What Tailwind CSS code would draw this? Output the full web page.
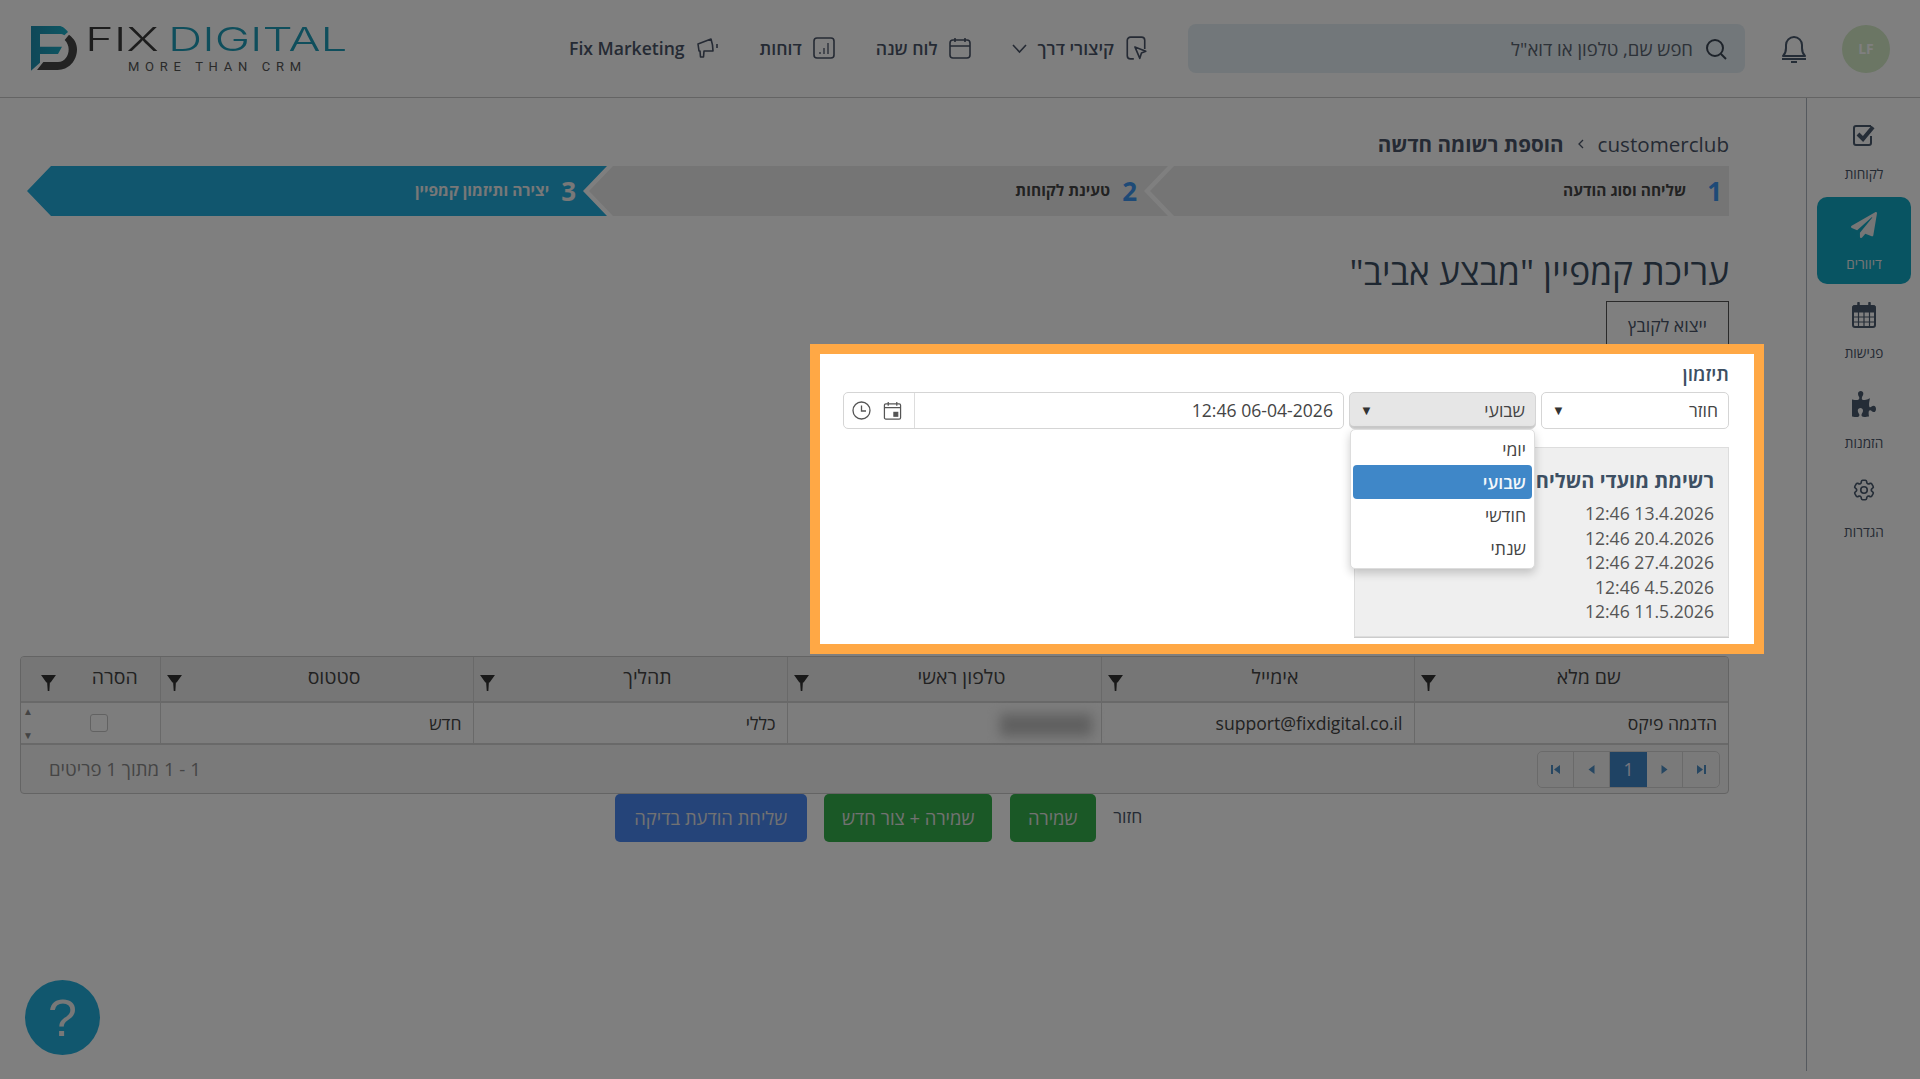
<!DOCTYPE html>
<html lang="he" dir="rtl">
<head>
  <meta charset="UTF-8">
  <title>עריכת קמפיין</title>
  <script src="https://cdn.jsdelivr.net/npm/@tailwindcss/browser@4"></script>
</head>
<body class="relative h-[1079px] overflow-hidden bg-white font-['Open_Sans','Noto_Sans',sans-serif] text-[#4a5568]">

  <!-- top bar -->
  <header class="flex h-[98px] items-center border-b border-[#c8c8c8] pr-[30px] pl-[31px]">
    <div class="flex size-12 items-center justify-center rounded-full bg-[#d6ecc8] text-sm font-bold text-white">LF</div>
    <svg class="mr-[35px] h-[28px] w-[26px] text-[#4a5a6e]" viewBox="0 0 26 28" fill="none" stroke="currentColor" stroke-width="2"><path d="M2 21c2-2 3-4 3-8V10a8 8 0 0 1 16 0v3c0 4 1 6 3 8z" stroke-linejoin="round"/><path d="M1 24h24"/><path d="M10 27h6"/></svg>
    <div class="mr-[36px] flex h-[49px] w-[557px] items-center gap-3 rounded-lg bg-[#e4eef4] px-[18px] text-[18.5px] text-[#5a6470]">
      <svg class="size-[22px] text-[#3b4654]" viewBox="0 0 22 22" fill="none" stroke="currentColor" stroke-width="2"><circle cx="10" cy="10" r="8"/><path d="m16 16 5 5"/></svg>
      <span>חפש שם, טלפון או דוא"ל</span>
    </div>
    <nav class="mr-[41px] flex items-center gap-[41px] text-[17.6px] font-semibold">
      <a class="flex items-center gap-[11px]">
        <svg class="h-[24px] w-[22px]" viewBox="0 0 20 22" fill="none" stroke="currentColor" stroke-width="1.500" stroke-linejoin="round"><path d="M8 21H5a3 3 0 0 1-3-3V4a3 3 0 0 1 3-3h10a3 3 0 0 1 3 3v8"/><path d="m9 10 10 4-4 1.500-1.500 5z"/></svg>
        <span>קיצורי דרך</span>
        <svg class="size-[15px]" viewBox="0 0 15 15" fill="none" stroke="currentColor" stroke-width="1.600"><path d="m1 4 6.500 7L14 4"/></svg>
      </a>
      <a class="flex items-center gap-[11px]">
        <svg class="size-[22px]" viewBox="0 0 22 22" fill="none" stroke="currentColor" stroke-width="1.600"><rect x="1" y="3" width="20" height="18" rx="3"/><path d="M1 9h20M6 1v4M16 1v4"/></svg>
        <span>לוח שנה</span>
      </a>
      <a class="flex items-center gap-[11px]">
        <svg class="size-[22px]" viewBox="0 0 22 22" fill="none" stroke="currentColor" stroke-width="1.600"><rect x="1" y="1" width="20" height="20" rx="3"/><path d="M7 15v2M11 11v6M15 6v11" stroke-width="1.300"/></svg>
        <span>דוחות</span>
      </a>
      <a class="flex items-center gap-[11px]">
        <svg class="h-[22px] w-[23px]" viewBox="0 0 23 22" fill="none" stroke="currentColor" stroke-width="1.600" stroke-linejoin="round"><path d="M2 7 15 2c1 3 2 8 2 12L8 14l-.500 6h-3L4 14H3z"/><path d="M21 7v4"/></svg>
        <span dir="ltr">Fix Marketing</span>
      </a>
    </nav>

    <!-- logo -->
    <div dir="ltr" class="mr-auto flex h-[46px] w-[312px]">
      <svg class="-mt-[6px] -ml-[6px] h-[56px] w-[60px] shrink-0" viewBox="0 0 180 168">
        <defs><linearGradient id="fd" x1="0" y1="0" x2="1" y2="0"><stop offset="0" stop-color="#1f8fb0"/><stop offset="1" stop-color="#1ab0c8"/></linearGradient></defs>
        <path fill="url(#fd)" d="M18 18h84c10 0 20 8 27 18L118 46c-3-3-8-4-14-4H45v38h66l-12 22H45v26l-27 24z"/>
        <path fill="#474747" d="M132 44c16 12 24 26 24 44 0 36-26 62-58 62H36l19-24h44c20 0 32-18 32-38 0-10-4-20-12-28z"/>
      </svg>
      <div class="flex flex-col">
        <div class="flex h-[26px] items-center font-['Inter'] text-[33px] leading-[26px] font-light">
          <span class="w-[83px] origin-left scale-x-[1.48] text-[#3a3a3a]">FIX</span>
          <span class="origin-left scale-x-[1.44] text-[#1e9db8]">DIGITAL</span>
        </div>
        <div class="mt-[9px] pl-[43px] font-['Roboto'] text-[13px] leading-[12px] tracking-[5.7px] whitespace-nowrap text-[#555]">MORE THAN CRM</div>
      </div>
    </div>
  </header>

  <div class="flex h-[973px]">
    <!-- side menu -->
    <aside class="flex h-[973px] w-[114px] shrink-0 flex-col gap-[2.5px] border-l border-[#aab2bd] pt-[9px] pr-[9px] pl-[10px] text-center text-[13.6px] leading-[18px]">
      <a class="flex h-[87px] flex-col items-center pt-[16px]">
        <svg class="size-[24px]" viewBox="0 0 24 24" fill="none"><path d="M19 13v7a2 2 0 0 1-2 2H4a2 2 0 0 1-2-2V5a2 2 0 0 1 2-2h15" stroke="#4a5a6e" stroke-width="2"/><path d="m6 11 5 5L21 4" stroke="#4a5a6e" stroke-width="4"/></svg>
        <span class="mt-[18px]">לקוחות</span>
      </a>
      <a class="flex h-[87px] flex-col items-center rounded-[10px] bg-[#11a8c4] pt-[15px] text-[#ececec]">
        <svg class="size-[26px]" viewBox="0 0 512 512" fill="currentColor"><path d="M476 3.200 12.500 270.600c-18.100 10.400-15.800 35.600 2.200 43.200L121 358.400l287.300-253.200c5.500-4.900 13.300 2.600 8.600 8.300L176 407v80.500c0 23.600 28.500 32.900 42.500 15.800L282 426l124.600 52.200c14.200 6 30.400-2.900 33-18.200l72-432C515 7.800 493.300-6.800 476 3.200z"/></svg>
        <span class="mt-[17px]">דיוורים</span>
      </a>
      <a class="flex h-[87px] flex-col items-center pt-[16px]">
        <svg class="h-[26px] w-[24px]" viewBox="0 0 24 26" fill="none" stroke="#4a5a6e"><rect x="1" y="4" width="22" height="21" rx="2" stroke-width="2"/><path d="M1 4h22v6H1z" fill="#4a5a6e"/><path d="M1 15h22M1 20h22M6.500 10v15M12 10v15M17.500 10v15" stroke-width="1.200"/><path d="M6.500 1v5M17.500 1v5" stroke-width="2.500" stroke-linecap="round"/></svg>
        <span class="mt-[16px]">פגישות</span>
      </a>
      <a class="flex h-[87px] flex-col items-center pt-[15px]">
        <svg class="h-[26px] w-[24px]" viewBox="0 0 576 512" preserveAspectRatio="none" fill="#4a5a6e"><path d="M519.442 288.651c-41.519 0-59.5 31.593-82.058 31.593C377.409 320.244 432 144 432 144s-196.288 80-196.288-3.297c0-35.827 36.288-46.250 36.288-85.985C272 19.216 243.885 0 210.539 0c-34.654 0-66.366 18.891-66.366 56.346 0 41.364 31.711 59.277 31.711 81.750C175.885 207.719 0 166.758 0 166.758v333.237s178.635 41.047 178.635-28.662c0-22.473-40-40.107-40-81.471 0-37.456 29.250-56.346 63.577-56.346 33.673 0 61.788 19.216 61.788 54.717 0 39.735-36.288 50.158-36.288 85.985 0 60.803 129.675 25.730 181.230 25.730 0 0-34.725-120.101 25.827-120.101 35.962 0 46.423 36.152 86.308 36.152C556.712 416 576 387.990 576 354.443c0-34.199-18.962-65.792-56.558-65.792z"/></svg>
        <span class="mt-[17px]">הזמנות</span>
      </a>
      <a class="flex h-[87px] flex-col items-center pt-[12px]">
        <svg class="size-[26px]" viewBox="0 0 24 24" fill="none" stroke="#4a5a6e" stroke-width="1.500"><path d="M9.594 3.940c.09-.542.56-.94 1.110-.94h2.593c.55 0 1.020.398 1.110.94l.213 1.281c.063.374.313.686.645.87.074.04.147.083.22.127.325.196.72.257 1.075.124l1.217-.456a1.125 1.125 0 0 1 1.370.49l1.296 2.247a1.125 1.125 0 0 1-.26 1.431l-1.003.827c-.293.241-.438.613-.43.992a7.723 7.723 0 0 1 0 .255c-.008.378.137.75.43.991l1.004.827c.424.35.534.955.26 1.430l-1.298 2.247a1.125 1.125 0 0 1-1.369.491l-1.217-.456c-.355-.133-.75-.072-1.076.124a6.470 6.470 0 0 1-.22.128c-.331.183-.581.495-.644.869l-.213 1.281c-.09.543-.56.94-1.110.94h-2.594c-.55 0-1.019-.398-1.110-.94l-.213-1.281c-.062-.374-.312-.686-.644-.87a6.520 6.520 0 0 1-.22-.127c-.325-.196-.72-.257-1.076-.124l-1.217.456a1.125 1.125 0 0 1-1.369-.49l-1.297-2.247a1.125 1.125 0 0 1 .26-1.431l1.004-.827c.292-.24.437-.613.43-.991a6.932 6.932 0 0 1 0-.255c.007-.38-.138-.751-.43-.992l-1.004-.827a1.125 1.125 0 0 1-.26-1.430l1.297-2.247a1.125 1.125 0 0 1 1.370-.491l1.216.456c.356.133.751.072 1.076-.124.072-.044.146-.086.22-.128.332-.183.582-.495.644-.869l.214-1.280Z"/><path d="M15 12a3 3 0 1 1-6 0 3 3 0 0 1 6 0Z"/></svg>
        <span class="mt-[20px]">הגדרות</span>
      </a>
    </aside>

    <main class="mr-[77px] ml-[20px] min-w-0 flex-1 pt-[32px]">
      <!-- breadcrumb -->
      <div class="flex h-[28px] items-center gap-[12px] text-[20.6px] leading-[28px]">
        <span>customerclub</span>
        <svg class="size-[10px]" viewBox="0 0 10 10" fill="none" stroke="currentColor" stroke-width="1.300"><path d="M7 1 3 5l4 4"/></svg>
        <span class="font-bold">הוספת רשומה חדשה</span>
      </div>

      <!-- wizard steps -->
      <div class="mt-[8px] flex h-[50px] text-[15.5px] font-bold">
        <div class="flex w-[579px] shrink-0 items-center gap-[21px] bg-[#ebebeb] pr-[7px] [clip-path:polygon(24px_0,100%_0,100%_100%,24px_100%,0_50%)]">
          <span class="text-[26px] text-[#3d95ee]">1</span><span class="text-[#444]">שליחה וסוג הודעה</span>
        </div>
        <div class="-mr-[18px] flex w-[579px] shrink-0 items-center gap-[12px] bg-[#ebebeb] pr-[31px] [clip-path:polygon(24px_0,100%_0,calc(100%-24px)_50%,100%_100%,24px_100%,0_50%)]">
          <span class="text-[26px] text-[#3d95ee]">2</span><span class="text-[#444]">טעינת לקוחות</span>
        </div>
        <div class="-mr-[18px] flex w-[580px] shrink-0 items-center gap-[12px] bg-[#22acdc] pr-[31px] text-[#f0f0f0] [clip-path:polygon(24px_0,100%_0,calc(100%-24px)_50%,100%_100%,24px_100%,0_50%)]">
          <span class="text-[26px]">3</span><span>יצירה ותיזמון קמפיין</span>
        </div>
      </div>

      <h1 class="mt-[32px] text-[35.4px] leading-[46px] font-normal text-[#3d4f63]">עריכת קמפיין "מבצע אביב"</h1>
      <button class="mt-[7px] flex h-[51px] w-[123px] items-center justify-center border border-[#555] pb-[2px] text-[17.6px] text-[#4a5568]">ייצוא לקובץ</button>

      <!-- scheduling -->
      <h2 class="mt-[12px] text-[19px] leading-[20px] font-semibold text-[#3d4f63]">תיזמון</h2>
      <div class="mt-[8px] flex h-[37px] w-[886px] gap-[5px] text-[17.6px] text-[#444]">
        <div class="flex w-[188px] items-center justify-between rounded-[5px] border border-[#d5d5d5] pr-[10px] pl-[10px]">
          <span>חוזר</span><span class="text-[13px] text-[#333]">▼</span>
        </div>
        <div class="relative flex w-[187px] items-center justify-between rounded-[5px] border border-[#d5d5d5] bg-[#e6e6e6] pr-[10px] pl-[10px] shadow-[inset_0_-2px_0_#ccc]">
          <span>שבועי</span><span class="text-[13px] text-[#333]">▼</span>
          <ul class="absolute top-full right-0 left-0 z-10 mt-[1px] h-[140px] rounded-[5px] border border-[#ddd] bg-white p-[2px] pt-[3px] shadow-[0_4px_10px_rgba(0,0,0,0.2)]">
            <li class="flex h-[32px] items-center px-[6px]">יומי</li>
            <li class="flex h-[34px] items-center rounded-[4px] bg-[#3f87c8] px-[6px] font-semibold text-[#f4f8fb]">שבועי</li>
            <li class="flex h-[33px] items-center px-[6px]">חודשי</li>
            <li class="flex h-[33px] items-center px-[6px]">שנתי</li>
          </ul>
        </div>
        <div class="flex w-[501px] rounded-[5px] border border-[#d5d5d5]">
          <input class="min-w-0 flex-1 px-[10px] text-right outline-none" dir="rtl" value="06-04-2026 12:46">
          <div class="flex w-[71px] items-center justify-center gap-[12px] border-r border-[#ddd] pr-[5px] text-[#555]">
            <svg class="size-[19px]" viewBox="0 0 19 20" fill="none" stroke="currentColor" stroke-width="1.300"><rect x="1" y="3" width="17" height="16" rx="1.500"/><path d="M1 7h17M5 1v4M14 1v4"/><rect x="11" y="12" width="4" height="4" fill="currentColor"/></svg>
            <svg class="size-[19px]" viewBox="0 0 19 19" fill="none" stroke="currentColor" stroke-width="1.300"><circle cx="9.500" cy="9.500" r="8.500"/><path d="M9.500 4.500v5.500h4.500"/></svg>
          </div>
        </div>
      </div>

      <div class="mt-[18px] h-[190px] w-[375px] border border-[#ddd] bg-[#efefef] py-[21px] pr-[14px] text-[17.6px] leading-[24.5px] text-[#555] shadow-[0_1px_0_#ccc]">
        <h3 class="mb-[8px] text-[20px] leading-[24px] font-bold whitespace-nowrap text-[#3d4f63]">רשימת מועדי השליחה</h3>
        <p>13.4.2026 12:46</p>
        <p>20.4.2026 12:46</p>
        <p>27.4.2026 12:46</p>
        <p>4.5.2026 12:46</p>
        <p>11.5.2026 12:46</p>
      </div>

      <!-- recipients table -->
      <div class="mt-[19px] h-[138px] overflow-hidden rounded-[4px] border border-[#c9c9c9] bg-[#f5f5f5] text-[17.6px] text-[#444]">
        <table class="w-full table-fixed border-collapse">
          <colgroup><col class="w-[314px]"><col class="w-[313px]"><col class="w-[314px]"><col class="w-[314px]"><col class="w-[313px]"><col></colgroup>
          <thead class="bg-[#ededed] text-[19.5px]">
            <tr class="h-[45px] border-b-2 border-[#d2d2d2]">
              <th class="border-l border-[#d2d2d2] font-normal"><div class="flex items-center"><span class="flex-1 pb-[4px] pl-[14px] text-center">שם מלא</span><svg class="mt-[7px] ml-[6px] h-[16px] w-[15px]" viewBox="0 0 14 15" fill="#333"><path d="M0 0h14L9 7l-.700 0L7.800 15H6.300L5.700 7 5 7z"/></svg></div></th>
              <th class="border-l border-[#d2d2d2] font-normal"><div class="flex items-center"><span class="flex-1 pb-[4px] pl-[14px] text-center">אימייל</span><svg class="mt-[7px] ml-[6px] h-[16px] w-[15px]" viewBox="0 0 14 15" fill="#333"><path d="M0 0h14L9 7l-.700 0L7.800 15H6.300L5.700 7 5 7z"/></svg></div></th>
              <th class="border-l border-[#d2d2d2] font-normal"><div class="flex items-center"><span class="flex-1 pb-[4px] pl-[14px] text-center">טלפון ראשי</span><svg class="mt-[7px] ml-[6px] h-[16px] w-[15px]" viewBox="0 0 14 15" fill="#333"><path d="M0 0h14L9 7l-.700 0L7.800 15H6.300L5.700 7 5 7z"/></svg></div></th>
              <th class="border-l border-[#d2d2d2] font-normal"><div class="flex items-center"><span class="flex-1 pb-[4px] pl-[14px] text-center">תהליך</span><svg class="mt-[7px] ml-[6px] h-[16px] w-[15px]" viewBox="0 0 14 15" fill="#333"><path d="M0 0h14L9 7l-.700 0L7.800 15H6.300L5.700 7 5 7z"/></svg></div></th>
              <th class="border-l border-[#d2d2d2] font-normal"><div class="flex items-center"><span class="flex-1 pb-[4px] pl-[14px] text-center">סטטוס</span><svg class="mt-[7px] ml-[6px] h-[16px] w-[15px]" viewBox="0 0 14 15" fill="#333"><path d="M0 0h14L9 7l-.700 0L7.800 15H6.300L5.700 7 5 7z"/></svg></div></th>
              <th class="font-normal"><div class="flex items-center"><span class="flex-1 pb-[4px] pl-[14px] text-center">הסרה</span><svg class="mt-[7px] ml-[20px] h-[16px] w-[15px]" viewBox="0 0 14 15" fill="#333"><path d="M0 0h14L9 7l-.700 0L7.800 15H6.300L5.700 7 5 7z"/></svg></div></th>
            </tr>
          </thead>
          <tbody class="bg-[#fafafa]">
            <tr class="h-[42px] border-b-2 border-[#d2d2d2]">
              <td class="border-l border-[#d2d2d2] px-[11px]">הדגמה פיקס</td>
              <td class="border-l border-[#d2d2d2] px-[11px]">support@fixdigital.co.il</td>
              <td class="border-l border-[#d2d2d2] pr-[9px]"><span class="inline-block h-[22px] w-[92px] bg-[#c0c0c0] align-middle blur-[6px]"></span></td>
              <td class="border-l border-[#d2d2d2] px-[11px]">כללי</td>
              <td class="border-l border-[#d2d2d2] px-[11px]">חדש</td>
              <td class="relative">
                <span class="mr-[52px] block size-[18px] rounded-[3px] border border-[#c4c4c4] bg-white"></span>
                <span class="absolute top-[2px] left-[2px] text-[10px] leading-[12px] text-[#888]">▲</span>
                <span class="absolute bottom-[2px] left-[2px] text-[10px] leading-[12px] text-[#888]">▼</span>
              </td>
            </tr>
          </tbody>
        </table>
        <div class="flex h-[49px] items-center justify-between pr-[8px] pl-[28px]">
          <div dir="ltr" class="flex h-[37px] overflow-hidden rounded-[5px] border border-[#d5d5d5] text-[#4f8fc4]">
            <span class="flex w-[36px] items-center justify-center border-r border-[#d5d5d5]"><svg class="size-[11px]" viewBox="0 0 11 11" fill="currentColor"><path d="M1 1h2v9H1zM10 1v9L4 5.500z"/></svg></span>
            <span class="flex w-[36px] items-center justify-center border-r border-[#d5d5d5]"><svg class="size-[11px]" viewBox="0 0 11 11" fill="currentColor"><path d="M8.500 1v9L2.500 5.500z"/></svg></span>
            <span class="flex w-[37px] items-center justify-center bg-[#3f87c8] text-[#eef]">1</span>
            <span class="flex w-[36px] items-center justify-center border-r border-[#d5d5d5]"><svg class="size-[11px]" viewBox="0 0 11 11" fill="currentColor"><path d="M2.500 1v9l6-4.500z"/></svg></span>
            <span class="flex w-[36px] items-center justify-center"><svg class="size-[11px]" viewBox="0 0 11 11" fill="currentColor"><path d="M1 1v9l6-4.500zM8 1h2v9H8z"/></svg></span>
          </div>
          <span class="pb-[2px] text-[18.6px] text-[#8a8a8a]">1 - 1 מתוך 1 פריטים</span>
        </div>
      </div>

      <!-- actions -->
      <div class="ml-[8px] flex h-[48px] items-stretch justify-center gap-[17.500px] text-[18.4px] text-[#e4e4e4]">
        <a class="flex items-center pb-[3px] text-[17.6px] text-[#4a5568]">חזור</a>
        <button class="w-[86px] rounded-[5px] bg-[#35b04c]">שמירה</button>
        <button class="w-[168px] rounded-[5px] bg-[#35b04c]">שמירה + צור חדש</button>
        <button class="w-[192px] rounded-[5px] bg-[#4a88f2]">שליחת הודעת בדיקה</button>
      </div>
    </main>
  </div>

  <!-- help button -->
  <button class="absolute bottom-[24px] left-[25px] flex size-[75px] items-center justify-center rounded-full bg-[#22aedc] font-['Liberation_Sans'] text-[52px] text-[#f0f0f0]">?</button>

  <!-- guide spotlight -->
  <div class="pointer-events-none absolute top-[344px] left-[810px] z-20 h-[310px] w-[954px] border-[10px] border-[#ffa845] shadow-[0_0_0_2000px_rgba(0,0,0,0.5)]"></div>
</body>
</html>
